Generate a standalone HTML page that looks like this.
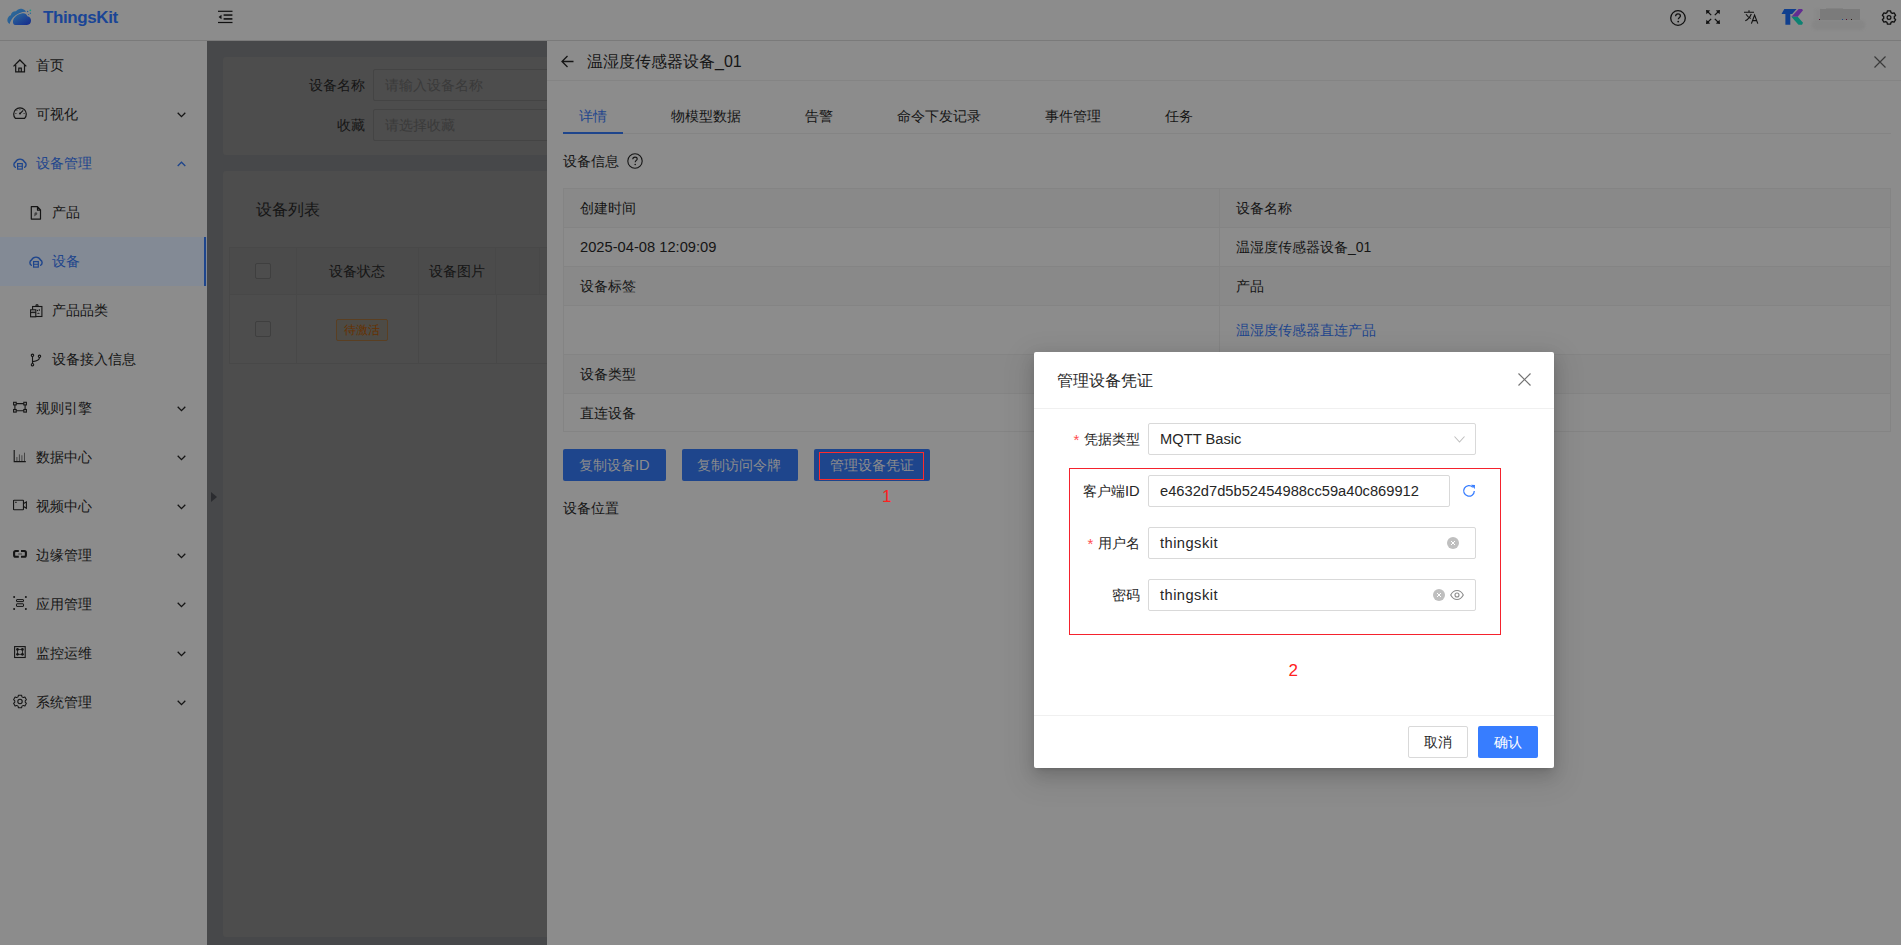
<!DOCTYPE html>
<html><head><meta charset="utf-8">
<style>
*{box-sizing:border-box;margin:0;padding:0}
html,body{width:1901px;height:945px;overflow:hidden;font-family:"Liberation Sans",sans-serif;font-size:14px;color:#151515;background:#8c8c8c;position:relative}
.abs{position:absolute}
.t{position:absolute;white-space:nowrap;line-height:20px}
svg{position:absolute;overflow:visible}
#header{left:0;top:0;width:1901px;height:41px;background:#8c8c8c;border-bottom:1px solid #7a7a7a}
#sider{left:0;top:41px;width:207px;height:904px;background:#8c8c8c}
#content{left:207px;top:41px;width:340px;height:904px;background:#47484a}
#drawer{left:547px;top:41px;width:1354px;height:904px;background:#8c8c8c}
.mi{position:absolute;left:0;width:207px;height:49px;color:#151515}
.mi .t{left:36px;top:14px}
.mi.sub .t{left:52px}
.mi svg.ic{left:13px;top:17px;width:14px;height:14px}
.mi.sub svg.ic{left:29px}
.mi svg.ch{left:177px;top:22px;width:9px;height:6px}
.blue{color:#1e458c}
</style></head><body>
<div id="header" class="abs">
  <!-- logo cloud -->
  <svg style="left:0;top:0" width="40" height="35" viewBox="0 0 40 35">
    <defs><linearGradient id="cg" x1="0" y1="0" x2="1" y2="1"><stop offset="0" stop-color="#2e6f9c"/><stop offset="1" stop-color="#14288c"/></linearGradient><linearGradient id="cg2" x1="0" y1="0" x2="1" y2="1"><stop offset="0" stop-color="#2e6f9c"/><stop offset="1" stop-color="#244f90"/></linearGradient></defs>
    <path d="M9.6 24 C7 22.5 6.8 19 8.5 17 C9 16 10 15.5 10.8 15.3 C11.3 12.5 13.5 11 16 11.3 C17.5 9 20 8.3 22.5 9 C24 9.4 25.3 10.3 26 11.8 C21.5 11.8 16.5 13.8 13 17.5 C11.5 19.3 10.3 21.5 9.6 24 Z" fill="url(#cg2)"/>
    <path d="M15.5 25 C13.3 25 12.8 23.2 13 21 C13.5 17.5 17.5 14 22.5 13.3 C24.8 13 26.6 14 27.4 16.3 C29.8 16.5 31 18.4 31 20.6 C31 23.4 29.6 25 27 25 Z" fill="url(#cg)"/>
    <circle cx="30.3" cy="10.3" r="0.9" fill="#1d9a86"/><circle cx="27.6" cy="11.5" r="0.75" fill="#2a5d98"/><circle cx="30.4" cy="13.3" r="0.7" fill="#2a6a98"/><circle cx="28.6" cy="14.5" r="0.6" fill="#2a5d98"/>
  </svg>
  <div class="t" style="left:43px;top:8px;font-size:17px;font-weight:bold;color:#1a4596;line-height:20px;letter-spacing:-0.4px">ThingsKit</div>
  <!-- menu fold icon -->
  <svg style="left:217.5px;top:10px" width="15" height="14" viewBox="0 0 15 14"><g fill="#111"><rect x="0" y="0.7" width="14.5" height="1.2"/><rect x="5.6" y="4.3" width="8.8" height="1.5"/><rect x="5.6" y="8.1" width="8.8" height="1.6"/><rect x="0" y="11.9" width="14.5" height="1.2"/><path d="M0.6 7 L3.5 4.8 L3.5 9.2 Z"/></g></svg>
  <!-- help -->
  <svg style="left:1670px;top:10px" width="16" height="16" viewBox="0 0 16 16"><circle cx="8" cy="8" r="7.3" fill="none" stroke="#111" stroke-width="1.3"/><path d="M5.6 6.2 C5.6 4.8 6.7 3.9 8 3.9 C9.3 3.9 10.4 4.8 10.4 6 C10.4 7.4 8.3 7.6 8.3 9.3" fill="none" stroke="#111" stroke-width="1.3"/><circle cx="8.2" cy="11.6" r="0.9" fill="#111"/></svg>
  <!-- fullscreen -->
  <svg style="left:1705.5px;top:9.5px" width="14" height="14" viewBox="0 0 14 14"><g stroke="#111" stroke-width="1.2" fill="none"><path d="M1.5 1.5 L5.2 5.2 M12.5 1.5 L8.8 5.2 M1.5 12.5 L5.2 8.8 M12.5 12.5 L8.8 8.8"/></g><g fill="#111"><path d="M0 0 L4.2 0.4 L0.4 4.2Z M14 0 L9.8 0.4 L13.6 4.2Z M0 14 L0.4 9.8 L4.2 13.6Z M14 14 L13.6 9.8 L9.8 13.6Z"/></g></svg>
  <!-- translate -->
  <svg style="left:1744px;top:10px" width="15" height="14" viewBox="0 0 15 14"><g stroke="#111" stroke-width="1.1" fill="none"><path d="M0 2.2 L10 2.2 M5 0.3 L5 2.2 M2 4.3 C3.5 6.5 5 8 6.8 8.6 M7.3 4 C6 7 4 9.5 1.3 10.8"/><path d="M7.4 13.6 L10.6 5 L13.8 13.6 M8.6 10.6 L12.6 10.6"/></g></svg>
  <!-- TK logo -->
  <svg style="left:1776px;top:4px" width="34" height="26" viewBox="0 0 34 26">
    <path d="M8.3 5 L20.6 5 L16.2 9.9 L14.3 9.9 L14.3 20.8 L9.4 20.8 L9.4 9.9 L5.5 9.9 Z" fill="#103f8e"/>
    <path d="M15.4 12.7 L22.6 5.1 L26 5.1 L27 6.3 L21.7 12.7 Z" fill="#622c92"/>
    <path d="M15.4 12.7 L21.7 12.7 L27 18.8 L26 20.8 L22.5 20.8 Z" fill="#0c8272"/>
  </svg>
  <!-- blurred name -->
  <div class="abs" style="left:1812px;top:20px;width:53px;height:10px;background:#868686;border-radius:5px;filter:blur(1px)"></div>
  <div class="abs" style="left:1815px;top:9px;width:6px;height:11px;background:#888;filter:blur(1px)"></div>
  <div class="abs" style="left:1820px;top:9px;width:40px;height:11px;background:#7b7b7b"></div>
  <div class="abs" style="left:1826px;top:8px;width:17px;height:1px;background:#828282"></div>
  <div class="abs" style="left:1819px;top:19px;width:1px;height:1px;background:#5a1030"></div>
  <div class="abs" style="left:1842px;top:19px;width:1px;height:1px;background:#1a4a8a"></div>
  <div class="abs" style="left:1846px;top:19px;width:1px;height:1px;background:#5a1030"></div>
  <div class="abs" style="left:1851px;top:19px;width:1px;height:1px;background:#2a1a10"></div>
  <!-- gear -->
  <svg style="left:1882px;top:9.5px" width="14" height="15" viewBox="0 0 14 15"><path d="M5.4 0.8 L8.6 0.8 L9 2.6 L10.4 3.4 L12.1 2.8 L13.6 5.4 L12.3 6.6 L12.3 8.4 L13.6 9.6 L12.1 12.2 L10.4 11.6 L9 12.4 L8.6 14.2 L5.4 14.2 L5 12.4 L3.6 11.6 L1.9 12.2 L0.4 9.6 L1.7 8.4 L1.7 6.6 L0.4 5.4 L1.9 2.8 L3.6 3.4 L5 2.6 Z" fill="none" stroke="#111" stroke-width="1.3" stroke-linejoin="round"/><circle cx="7" cy="7.5" r="1.9" fill="none" stroke="#111" stroke-width="1.2"/></svg>
</div>
<div id="sider" class="abs">
</div>
<div class="mi" style="top:41px;"><svg class="ic" style="top:17px" viewBox="0 0 14 14"><path d="M0.5 8.4 L6.9 2 L13.3 8.4" stroke="#151515" fill="none" stroke-width="1.3"/><path d="M2.7 7 L2.7 13.9 L11.5 13.9 L11.5 7 M5.8 13.9 L5.8 10.1 L8.3 10.1 L8.3 13.9" stroke="#151515" fill="none" stroke-width="1.2"/></svg><div class="t" style="color:#151515">首页</div></div>
<div class="mi" style="top:90px;"><svg class="ic" style="top:17px" viewBox="0 0 14 14"><path d="M2.4 11.4 A6.3 6.3 0 1 1 11.6 11.4 Z" stroke="#151515" fill="none" stroke-width="1.2" stroke-linejoin="round"/><path d="M7 6.6 L10.2 3.3" stroke="#151515" fill="none" stroke-width="1.1"/><circle cx="7" cy="6.6" r="1" fill="#151515"/><path d="M2.4 6.5 L3.4 6.5 M3.7 3.3 L4.4 4 M6.9 2.3 L6.9 3.1 M10.6 6.5 L11.6 6.5" stroke="#151515" fill="none" stroke-width="0.9"/></svg><div class="t" style="color:#151515">可视化</div><svg class="ch" viewBox="0 0 9 6"><path d="M0.7 0.8 L4.5 4.6 L8.3 0.8" stroke="#151515" stroke-width="1.3" fill="none"/></svg></div>
<div class="mi" style="top:139px;"><svg class="ic" style="top:17px" viewBox="0 0 14 14"><path d="M2.3 11.3 C0.3 9.8 0.5 7 2.5 6 C3.5 4 5 3.1 7 3.1 C9 3.1 10.5 4 11.5 6 C13.5 7 13.7 9.8 11.7 11.3" stroke="#1e458c" fill="none" stroke-width="1.4" stroke-linecap="round"/><rect x="4.6" y="7.6" width="4.7" height="5.5" stroke="#1e458c" fill="none" stroke-width="1.2"/><path d="M4.6 10.3 L9.3 10.3" stroke="#1e458c" fill="none" stroke-width="1"/></svg><div class="t" style="color:#1e458c">设备管理</div><svg class="ch" viewBox="0 0 9 6"><path d="M0.7 5 L4.5 1.2 L8.3 5" stroke="#1e458c" stroke-width="1.3" fill="none"/></svg></div>
<div class="mi sub" style="top:188px;"><svg class="ic" style="top:17px" viewBox="0 0 14 14"><path d="M2.3 1.7 L8.5 1.7 L11.5 4.9 L11.5 14.1 L2.3 14.1 Z M8.5 1.7 L8.5 5.2 L11.5 5.2" stroke="#151515" fill="none" stroke-width="1.2" stroke-linejoin="round"/><path d="M5.2 11.6 L5.5 7.9 Q6.6 7 7.7 7.6 Q8.9 8.4 8 9.4 Z" fill="#444"/></svg><div class="t" style="color:#151515">产品</div></div>
<div class="mi sub" style="top:237px;background:#838a95;"><div class="abs" style="left:204px;top:0;width:2px;height:49px;background:#1e458c"></div><svg class="ic" style="top:17px" viewBox="0 0 14 14"><path d="M2.3 11.3 C0.3 9.8 0.5 7 2.5 6 C3.5 4 5 3.1 7 3.1 C9 3.1 10.5 4 11.5 6 C13.5 7 13.7 9.8 11.7 11.3" stroke="#1e458c" fill="none" stroke-width="1.4" stroke-linecap="round"/><rect x="4.6" y="7.6" width="4.7" height="5.5" stroke="#1e458c" fill="none" stroke-width="1.2"/><path d="M4.6 10.3 L9.3 10.3" stroke="#1e458c" fill="none" stroke-width="1"/></svg><div class="t" style="color:#1e458c">设备</div></div>
<div class="mi sub" style="top:286px;"><svg class="ic" style="top:17px" viewBox="0 0 14 14"><rect x="3.6" y="3.5" width="9.3" height="10" stroke="#151515" fill="none" stroke-width="1.1"/><path d="M6.8 3.5 L7.3 1.8 L8.7 1.8 L9.2 3.5" stroke="#151515" fill="none" stroke-width="1.1"/><rect x="1.6" y="6.8" width="5.2" height="7" fill="#8c8c8c" stroke="#151515" fill="none" stroke-width="1.1"/><path d="M1.6 9.6 L6.8 9.6" stroke="#151515" fill="none" stroke-width="1"/><rect x="2.4" y="7.5" width="3.6" height="1.5" fill="#666"/><circle cx="8.5" cy="7.5" r="0.65" fill="#151515"/><path d="M10.3 6.2 L10.3 7.9" stroke="#151515" fill="none" stroke-width="1"/><path d="M8 10.8 Q9.4 8.6 10.9 10.8 Z" fill="#151515"/></svg><div class="t" style="color:#151515">产品品类</div></div>
<div class="mi sub" style="top:335px;"><svg class="ic" style="top:17px" viewBox="0 0 14 14"><circle cx="3.5" cy="3.3" r="1.2" stroke="#151515" fill="none" stroke-width="1.1"/><circle cx="3.5" cy="12.7" r="1.2" stroke="#151515" fill="none" stroke-width="1.1"/><circle cx="10.5" cy="4.3" r="1.2" stroke="#151515" fill="none" stroke-width="1.1"/><path d="M3.5 4.5 L3.5 11.5 M3.7 9.6 C7 9.2 10.5 8.8 10.5 5.5" stroke="#151515" fill="none" stroke-width="1.1"/></svg><div class="t" style="color:#151515">设备接入信息</div></div>
<div class="mi" style="top:384px;"><svg class="ic" style="top:17px" viewBox="0 0 14 14"><rect x="0.6" y="1.3" width="2.6" height="2.6" stroke="#151515" fill="none" stroke-width="1.1"/><rect x="10.8" y="1.3" width="2.6" height="2.6" stroke="#151515" fill="none" stroke-width="1.1"/><rect x="0.6" y="8.5" width="2.6" height="2.6" stroke="#151515" fill="none" stroke-width="1.1"/><rect x="10.8" y="8.5" width="2.6" height="2.6" stroke="#151515" fill="none" stroke-width="1.1"/><path d="M3.2 2.6 L10.8 2.6 M3.2 9.8 L10.8 9.8 M1.9 3.9 L1.9 8.5 M12.1 3.9 L12.1 8.5" stroke="#151515" fill="none" stroke-width="1.1"/></svg><div class="t" style="color:#151515">规则引擎</div><svg class="ch" viewBox="0 0 9 6"><path d="M0.7 0.8 L4.5 4.6 L8.3 0.8" stroke="#151515" stroke-width="1.3" fill="none"/></svg></div>
<div class="mi" style="top:433px;"><svg class="ic" style="top:17px" viewBox="0 0 14 14"><path d="M1.2 0 L1.2 11.6 L12.8 11.6" stroke="#151515" fill="none" stroke-width="1.1"/><path d="M3.9 7 L3.9 11 M6.4 4.4 L6.4 11 M8.9 5.3 L8.9 11 M11.5 2.7 L11.5 11" stroke="#444" stroke-width="1" fill="none"/></svg><div class="t" style="color:#151515">数据中心</div><svg class="ch" viewBox="0 0 9 6"><path d="M0.7 0.8 L4.5 4.6 L8.3 0.8" stroke="#151515" stroke-width="1.3" fill="none"/></svg></div>
<div class="mi" style="top:482px;"><svg class="ic" style="top:17px" viewBox="0 0 14 14"><rect x="0.55" y="1.25" width="9.9" height="9.5" rx="0.6" stroke="#151515" fill="none" stroke-width="1.1"/><path d="M10.5 4.4 L13.4 2.9 L13.4 9.2 L10.5 7.6" stroke="#151515" fill="none" stroke-width="1.1"/><path d="M2 3.3 L3.8 3.3" stroke="#151515" fill="none" stroke-width="0.9"/></svg><div class="t" style="color:#151515">视频中心</div><svg class="ch" viewBox="0 0 9 6"><path d="M0.7 0.8 L4.5 4.6 L8.3 0.8" stroke="#151515" stroke-width="1.3" fill="none"/></svg></div>
<div class="mi" style="top:531px;"><svg class="ic" style="top:17px" viewBox="0 0 14 14"><path d="M5.8 3 L2.6 3 Q1.1 3 1.1 4.5 L1.1 7.3 Q1.1 8.8 2.6 8.8 L5.8 8.8 M8 3 L11.4 3 Q12.9 3 12.9 4.5 L12.9 7.3 Q12.9 8.8 11.4 8.8 L8 8.8" stroke="#151515" fill="none" stroke-width="2.1"/><rect x="5.2" y="5.3" width="3.8" height="1.4" fill="#555"/></svg><div class="t" style="color:#151515">边缘管理</div><svg class="ch" viewBox="0 0 9 6"><path d="M0.7 0.8 L4.5 4.6 L8.3 0.8" stroke="#151515" stroke-width="1.3" fill="none"/></svg></div>
<div class="mi" style="top:580px;"><svg class="ic" style="top:17px" viewBox="0 0 14 14"><circle cx="1.1" cy="0" r="1" fill="#151515"/><circle cx="12.9" cy="0" r="1" fill="#151515"/><circle cx="1.1" cy="11.9" r="1" fill="#151515"/><circle cx="12.9" cy="11.9" r="1" fill="#151515"/><rect x="3.5" y="2.6" width="7" height="2" rx="0.4" stroke="#151515" fill="none" stroke-width="1"/><rect x="3.5" y="6.8" width="7" height="2.6" rx="0.4" stroke="#151515" fill="none" stroke-width="1"/></svg><div class="t" style="color:#151515">应用管理</div><svg class="ch" viewBox="0 0 9 6"><path d="M0.7 0.8 L4.5 4.6 L8.3 0.8" stroke="#151515" stroke-width="1.3" fill="none"/></svg></div>
<div class="mi" style="top:629px;"><svg class="ic" style="top:17px" viewBox="0 0 14 14"><rect x="1.6" y="0.6" width="10.6" height="10.9" stroke="#151515" fill="none" stroke-width="1.1"/><rect x="4.5" y="3.4" width="4.9" height="4.9" stroke="#151515" fill="none" stroke-width="0.8"/><circle cx="4.5" cy="3.4" r="1.35" fill="#151515"/><circle cx="9.4" cy="3.4" r="1.35" fill="#151515"/><circle cx="4.5" cy="8.3" r="1.35" fill="#151515"/><circle cx="9.4" cy="8.3" r="1.35" fill="#151515"/></svg><div class="t" style="color:#151515">监控运维</div><svg class="ch" viewBox="0 0 9 6"><path d="M0.7 0.8 L4.5 4.6 L8.3 0.8" stroke="#151515" stroke-width="1.3" fill="none"/></svg></div>
<div class="mi" style="top:678px;"><svg class="ic" style="top:16px" viewBox="0 0 14 14"><path d="M5.3 0.7 L8.7 0.7 L9.1 2.5 L10.6 3.3 L12.3 2.7 L13.9 5.5 L12.6 6.7 L12.6 8.3 L13.9 9.5 L12.3 12.3 L10.6 11.7 L9.1 12.5 L8.7 14.3 L5.3 14.3 L4.9 12.5 L3.4 11.7 L1.7 12.3 L0.1 9.5 L1.4 8.3 L1.4 6.7 L0.1 5.5 L1.7 2.7 L3.4 3.3 L4.9 2.5 Z" stroke="#151515" fill="none" stroke-width="1.1" stroke-linejoin="round" transform="translate(7 7.5) scale(0.93) translate(-7 -7.5)"/><circle cx="7" cy="7.5" r="2.2" stroke="#151515" fill="none" stroke-width="1.1"/></svg><div class="t" style="color:#151515">系统管理</div><svg class="ch" viewBox="0 0 9 6"><path d="M0.7 0.8 L4.5 4.6 L8.3 0.8" stroke="#151515" stroke-width="1.3" fill="none"/></svg></div>
<div id="content" class="abs"></div>
<!-- search card -->
<div class="abs" style="left:223px;top:57px;width:400px;height:98px;background:#4d4d4d;border-radius:3px"></div>
<div class="t" style="left:309px;top:75px;color:#151515">设备名称</div>
<div class="abs" style="left:373px;top:69px;width:300px;height:32px;border:1px solid #444;border-radius:2px;background:#4d4d4d"></div>
<div class="t" style="left:385px;top:75px;color:#3a3a3a">请输入设备名称</div>
<div class="t" style="left:337px;top:115px;color:#151515">收藏</div>
<div class="abs" style="left:373px;top:109px;width:300px;height:32px;border:1px solid #444;border-radius:2px;background:#4d4d4d"></div>
<div class="t" style="left:385px;top:115px;color:#3a3a3a">请选择收藏</div>
<!-- list card -->
<div class="abs" style="left:223px;top:171px;width:400px;height:766px;background:#4d4d4d;border-radius:3px"></div>
<div class="t" style="left:256px;top:199px;font-size:16px;line-height:22px;color:#151515">设备列表</div>
<div class="abs" style="left:229px;top:247px;width:400px;height:117px;border:1px solid #484848;background:#4d4d4d"></div>
<div class="abs" style="left:229px;top:247px;width:400px;height:48px;border:1px solid #484848;background:#4b4b4b"></div>
<div class="abs" style="left:296px;top:247px;width:1px;height:117px;background:#484848"></div>
<div class="abs" style="left:418px;top:247px;width:1px;height:117px;background:#484848"></div>
<div class="abs" style="left:495px;top:247px;width:1px;height:48px;background:#484848"></div><div class="abs" style="left:496px;top:295px;width:1px;height:69px;background:#484848"></div>
<div class="abs" style="left:539px;top:247px;width:1px;height:48px;background:#484848"></div>
<div class="abs" style="left:255px;top:263px;width:16px;height:16px;border:1px solid #3f3f3f;border-radius:2px;background:#4d4d4d"></div>
<div class="abs" style="left:255px;top:321px;width:16px;height:16px;border:1px solid #3f3f3f;border-radius:2px;background:#4d4d4d"></div>
<div class="t" style="left:329px;top:261px;color:#151515">设备状态</div>
<div class="t" style="left:429px;top:261px;color:#151515">设备图片</div>
<div class="abs" style="left:336px;top:319px;width:52px;height:22px;border:1px solid #5a3f22;border-radius:2px;background:#4d4b46"></div>
<div class="t" style="left:343.5px;top:320px;font-size:12px;color:#663100">待激活</div>
<svg style="left:211px;top:492px" width="6" height="10" viewBox="0 0 6 10"><path d="M0 0 L6 5 L0 10 Z" fill="#2b2c30"/></svg>
<!-- drawer shadow -->

<div id="drawer" class="abs"></div>
<!-- drawer header -->
<svg style="left:561px;top:55px" width="13" height="13" viewBox="0 0 13 13"><path d="M12.5 6.5 L1 6.5 M6.5 1 L1 6.5 L6.5 12" stroke="#151515" stroke-width="1.3" fill="none"/></svg>
<div class="t" style="left:587px;top:51px;font-size:16px;line-height:22px;color:#151515">温湿度传感器设备_01</div>
<svg style="left:1874px;top:56px" width="12" height="12" viewBox="0 0 12 12"><path d="M0.5 0.5 L11.5 11.5 M11.5 0.5 L0.5 11.5" stroke="#3a3a3a" stroke-width="1.2"/></svg>
<div class="abs" style="left:547px;top:80px;width:1354px;height:1px;background:#848484"></div>
<!-- tabs -->
<div class="t" style="left:579px;top:106px;color:#1e458c">详情</div>
<div class="t" style="left:671px;top:106px">物模型数据</div>
<div class="t" style="left:805px;top:106px">告警</div>
<div class="t" style="left:897px;top:106px">命令下发记录</div>
<div class="t" style="left:1045px;top:106px">事件管理</div>
<div class="t" style="left:1165px;top:106px">任务</div>
<div class="abs" style="left:563px;top:133px;width:1328px;height:1px;background:#848484"></div>
<div class="abs" style="left:563px;top:132px;width:60px;height:2px;background:#1e458c"></div>
<!-- device info title -->
<div class="t" style="left:563px;top:151px">设备信息</div>
<svg style="left:627px;top:153px" width="16" height="16" viewBox="0 0 16 16"><circle cx="8" cy="8" r="7.2" fill="none" stroke="#151515" stroke-width="1.1"/><path d="M5.8 6.2 C5.8 4.9 6.8 4.1 8 4.1 C9.2 4.1 10.2 4.9 10.2 6 C10.2 7.3 8.2 7.5 8.2 9.2" fill="none" stroke="#151515" stroke-width="1.1"/><circle cx="8.2" cy="11.5" r="0.8" fill="#151515"/></svg>
<!-- descriptions -->
<div class="abs" style="left:563px;top:188px;width:1328px;height:244px;border:1px solid #848484;border-right-color:#848484"></div>
<div class="abs" style="left:564px;top:189px;width:1326px;height:38px;background:#898989"></div>
<div class="abs" style="left:564px;top:267px;width:1326px;height:38px;background:#898989"></div>
<div class="abs" style="left:564px;top:355px;width:1326px;height:38px;background:#898989"></div>
<div class="abs" style="left:564px;top:227px;width:1326px;height:1px;background:#848484"></div>
<div class="abs" style="left:564px;top:266px;width:1326px;height:1px;background:#848484"></div>
<div class="abs" style="left:564px;top:305px;width:1326px;height:1px;background:#848484"></div>
<div class="abs" style="left:564px;top:354px;width:1326px;height:1px;background:#848484"></div>
<div class="abs" style="left:564px;top:393px;width:1326px;height:1px;background:#848484"></div>
<div class="abs" style="left:1219px;top:189px;width:1px;height:242px;background:#848484"></div>
<div class="t" style="left:580px;top:198px">创建时间</div>
<div class="t" style="left:580px;top:237px;font-size:14.7px">2025-04-08 12:09:09</div>
<div class="t" style="left:580px;top:276px">设备标签</div>
<div class="t" style="left:580px;top:364px">设备类型</div>
<div class="t" style="left:580px;top:403px">直连设备</div>
<div class="t" style="left:1236px;top:198px">设备名称</div>
<div class="t" style="left:1236px;top:237px">温湿度传感器设备_01</div>
<div class="t" style="left:1236px;top:276px">产品</div>
<div class="t" style="left:1236px;top:320px;color:#1e458c">温湿度传感器直连产品</div>
<!-- buttons -->
<div class="abs" style="left:563px;top:449px;width:103px;height:32px;background:#1e458c;border-radius:2px"></div>
<div class="t" style="left:579px;top:455px;color:#8c8c8c">复制设备<span style="font-size:14.7px">ID</span></div>
<div class="abs" style="left:682px;top:449px;width:116px;height:32px;background:#1e458c;border-radius:2px"></div>
<div class="t" style="left:697px;top:455px;color:#8c8c8c">复制访问令牌</div>
<div class="abs" style="left:814px;top:449px;width:116px;height:32px;background:#1e458c;border-radius:2px"></div>
<div class="t" style="left:830px;top:455px;color:#8c8c8c">管理设备凭证</div>
<div class="abs" style="left:819px;top:452px;width:105px;height:28px;border:1px solid #ff2b2b"></div>
<div class="t" style="left:882px;top:487px;font-size:17px;color:#ff2020">1</div>
<div class="t" style="left:563px;top:498px">设备位置</div>
<!-- modal -->
<div id="modal" class="abs" style="left:1034px;top:352px;width:520px;height:416px;background:#fff;border-radius:2px;box-shadow:0 3px 6px -4px rgba(0,0,0,.25),0 6px 16px rgba(0,0,0,.15),0 9px 28px 8px rgba(0,0,0,.08)"></div>
<div class="t" style="left:1057px;top:370px;font-size:16px;line-height:22px;color:#262626">管理设备凭证</div>
<svg style="left:1518px;top:373px" width="13" height="13" viewBox="0 0 13 13"><path d="M0.5 0.5 L12.5 12.5 M12.5 0.5 L0.5 12.5" stroke="#737373" stroke-width="1.2"/></svg>
<div class="abs" style="left:1034px;top:408px;width:520px;height:1px;background:#f0f0f0"></div>
<!-- form -->
<div class="t" style="left:1073.5px;top:430px;color:#ff4d4f;font-size:15px">*</div>
<div class="t" style="left:1084px;top:429px;color:#262626">凭据类型</div>
<div class="abs" style="left:1148px;top:423px;width:328px;height:32px;border:1px solid #d9d9d9;border-radius:2px"></div>
<div class="t" style="left:1160px;top:429px;color:#262626;font-size:14.7px">MQTT Basic</div>
<svg style="left:1454px;top:436px" width="11" height="7" viewBox="0 0 11 7"><path d="M0.5 0.5 L5.5 6 L10.5 0.5" stroke="#bfbfbf" stroke-width="1.1" fill="none"/></svg>
<div class="abs" style="left:1069px;top:468px;width:432px;height:167px;border:1px solid #f5222d"></div>
<div class="t" style="left:1083px;top:481px;color:#262626">客户端<span style="font-size:14.7px">ID</span></div>
<div class="abs" style="left:1148px;top:475px;width:302px;height:32px;border:1px solid #d9d9d9;border-radius:2px"></div>
<div class="t" style="left:1160px;top:481px;color:#262626;font-size:14.7px">e4632d7d5b52454988cc59a40c869912</div>
<svg style="left:1462px;top:484px" width="14" height="14" viewBox="0 0 14 14"><path d="M12.3 7 A5.3 5.3 0 1 1 10.8 3.2" stroke="#377dff" stroke-width="1.3" fill="none"/><path d="M9 0.8 L13 1 L12.8 5 Z" fill="#377dff"/></svg>
<div class="t" style="left:1087.5px;top:534px;color:#ff4d4f;font-size:15px">*</div>
<div class="t" style="left:1098px;top:533px;color:#262626">用户名</div>
<div class="abs" style="left:1148px;top:527px;width:328px;height:32px;border:1px solid #d9d9d9;border-radius:2px"></div>
<div class="t" style="left:1160px;top:533px;color:#262626;font-size:14.7px;letter-spacing:0.45px">thingskit</div>
<svg style="left:1447px;top:537px" width="12" height="12" viewBox="0 0 12 12"><circle cx="6" cy="6" r="6" fill="#bfbfbf"/><path d="M4 4 L8 8 M8 4 L4 8" stroke="#fff" stroke-width="1"/></svg>
<div class="t" style="left:1112px;top:585px;color:#262626">密码</div>
<div class="abs" style="left:1148px;top:579px;width:328px;height:32px;border:1px solid #d9d9d9;border-radius:2px"></div>
<div class="t" style="left:1160px;top:585px;color:#262626;font-size:14.7px;letter-spacing:0.45px">thingskit</div>
<svg style="left:1433px;top:589px" width="12" height="12" viewBox="0 0 12 12"><circle cx="6" cy="6" r="6" fill="#bfbfbf"/><path d="M4 4 L8 8 M8 4 L4 8" stroke="#fff" stroke-width="1"/></svg>
<svg style="left:1450px;top:589px" width="14" height="12" viewBox="0 0 14 12"><path d="M0.7 6 C2.5 2.5 4.8 1.5 7 1.5 C9.2 1.5 11.5 2.5 13.3 6 C11.5 9.5 9.2 10.5 7 10.5 C4.8 10.5 2.5 9.5 0.7 6 Z" stroke="#8c8c8c" stroke-width="1.1" fill="none"/><circle cx="7" cy="6" r="2" stroke="#8c8c8c" stroke-width="1.1" fill="none"/></svg>
<div class="t" style="left:1288.5px;top:661px;font-size:17px;color:#ff2020">2</div>
<!-- footer -->
<div class="abs" style="left:1034px;top:715px;width:520px;height:1px;background:#f0f0f0"></div>
<div class="abs" style="left:1408px;top:726px;width:60px;height:32px;border:1px solid #d9d9d9;border-radius:2px;background:#fff"></div>
<div class="t" style="left:1424px;top:732px;color:#262626">取消</div>
<div class="abs" style="left:1478px;top:726px;width:60px;height:32px;border-radius:2px;background:#377dff"></div>
<div class="t" style="left:1494px;top:732px;color:#fff">确认</div>
</body></html>
